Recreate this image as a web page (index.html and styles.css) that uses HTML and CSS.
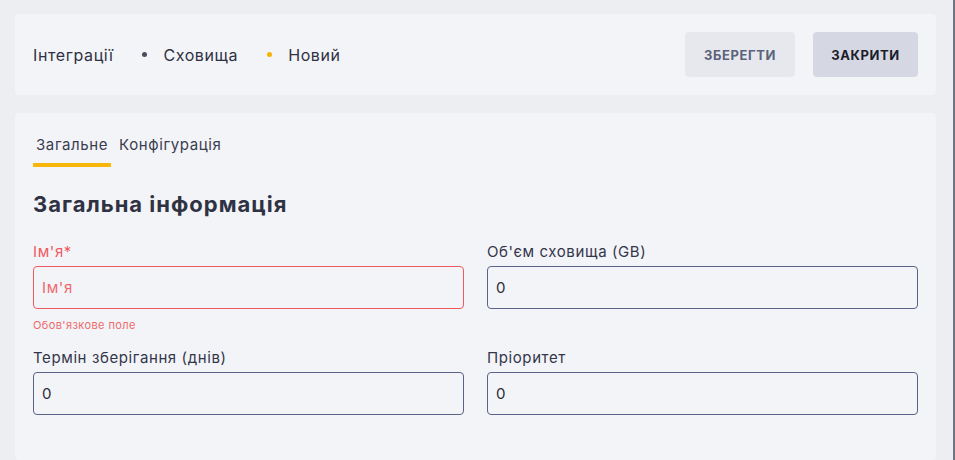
FILE: index.html
```html
<!DOCTYPE html>
<html lang="uk">
<head>
<meta charset="utf-8">
<link rel="stylesheet" href="styles.css">
</head>
<body>
<div class="page">
  <header class="topbar">
    <nav class="crumbs">
      <span class="crumb">Інтеграції</span>
      <span class="dot"></span>
      <span class="crumb">Сховища</span>
      <span class="dot dot-active"></span>
      <span class="crumb">Новий</span>
    </nav>
    <div class="actions">
      <button class="btn btn-save">ЗБЕРЕГТИ</button>
      <button class="btn btn-close">ЗАКРИТИ</button>
    </div>
  </header>
  <section class="card">
    <div class="tabs">
      <span class="tab tab-active">Загальне</span>
      <span class="tab">Конфігурація</span>
    </div>
    <h2 class="title">Загальна інформація</h2>
    <div class="grid">
      <div class="field">
        <label class="label label-error">Ім'я*</label>
        <div class="input input-error"><span class="placeholder">Ім'я</span></div>
        <div class="hint">Обов'язкове поле</div>
      </div>
      <div class="field">
        <label class="label">Об'єм сховища (GB)</label>
        <div class="input">0</div>
      </div>
      <div class="field">
        <label class="label">Термін зберігання (днів)</label>
        <div class="input">0</div>
      </div>
      <div class="field">
        <label class="label">Пріоритет</label>
        <div class="input">0</div>
      </div>
    </div>
  </section>
</div>
</body>
</html>
```
FILE: styles.css
```css
* { box-sizing: border-box; }
html, body { margin: 0; padding: 0; }
body {
  background: #edeef2;
  font-family: "Inter", "Noto Sans", sans-serif;
  color: #2e3142;
  height: 460px;
  overflow: hidden;
}
.page {
  width: 955px;
  height: 460px;
  padding: 14px 17px 0 15px;
  border-right: 2px solid #707380;
  display: flex;
  flex-direction: column;
  gap: 18px;
}
.topbar {
  background: #f3f4f8;
  border-radius: 4px;
  height: 81px;
  flex: none;
  display: flex;
  align-items: center;
  justify-content: space-between;
  padding: 0 18px;
}
.crumbs {
  display: flex;
  align-items: center;
  font-size: 16px;
  letter-spacing: 0.6px;
  color: #2e3142;
}
.dot {
  width: 5px;
  height: 5px;
  border-radius: 50%;
  background: #4a4d5c;
  margin: 0 16px 0 29px;
}
.dot-active { background: #f5b400; }
.actions { display: flex; gap: 18px; }
.btn {
  border: none;
  border-radius: 4px;
  height: 45px;
  font-family: inherit;
  font-weight: 700;
  font-size: 13px;
  letter-spacing: 0.6px;
}
.btn-save { width: 110px; background: #e6e8ee; color: #5b627a; }
.btn-close { width: 105px; background: #d5d8e2; color: #1c1d2c; }
.card {
  flex: 1;
  background: #f3f4f8;
  border-radius: 4px;
  padding: 23px 18px 0;
}
.tabs { display: flex; gap: 5px; }
.tab {
  font-size: 15px;
  line-height: 18px;
  letter-spacing: 0.6px;
  color: #3a3d4e;
  padding: 0 3px 9px 3px;
  border-bottom: 4px solid transparent;
}
.tab-active { border-bottom-color: #f6b60a; }
.title {
  margin: 23px 0 0;
  font-size: 22px;
  line-height: 28px;
  font-weight: 700;
  letter-spacing: 1px;
  color: #2f3243;
}
.grid {
  margin-top: 25px;
  display: grid;
  grid-template-columns: 1fr 1fr;
  column-gap: 23px;
  row-gap: 17px;
}
.field { display: flex; flex-direction: column; }
.label {
  font-size: 15px;
  line-height: 18px;
  letter-spacing: 0.6px;
  color: #33364a;
  margin-bottom: 5px;
}
.label-error { color: #ef5a5e; }
.input {
  height: 43px;
  border: 1px solid #5a6286;
  border-radius: 4px;
  padding: 0 8px;
  display: flex;
  align-items: center;
  font-size: 15px;
  letter-spacing: 0.6px;
  color: #2a2c3a;
}
.input-error { border-color: #ef5a5e; }
.placeholder { color: #ef6a6c; }
.hint {
  margin-top: 10px;
  font-size: 11px;
  line-height: 13px;
  letter-spacing: 0.4px;
  color: #ef6a6c;
}
```
